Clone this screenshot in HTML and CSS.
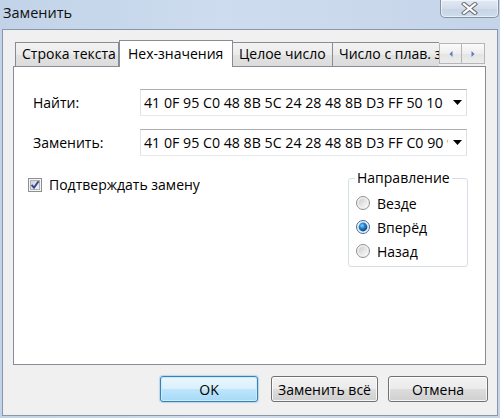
FILE: index.html
```html
<!DOCTYPE html>
<html lang="ru">
<head>
<meta charset="utf-8">
<title>Заменить</title>
<link rel="stylesheet" href="styles.css">
</head>
<body>
<div class="window">
  <header class="titlebar">
    <span class="title">Заменить</span>
    <button class="close" aria-label="Закрыть">
      <svg width="17" height="13" viewBox="0 0 17 13">
        <path d="M3 2 L14 11 M14 2 L3 11" stroke="#6f7277" stroke-width="4.2" stroke-linecap="square" fill="none"/>
        <path d="M3 2 L14 11 M14 2 L3 11" stroke="#ffffff" stroke-width="2.2" stroke-linecap="square" fill="none"/>
      </svg>
    </button>
  </header>
  <main class="client">
    <div class="tabs-row">
      <div class="tabstrip">
        <div class="tab t1">Строка текста</div>
        <div class="tab t2 active">Hex-значения</div>
        <div class="tab t3">Целое число</div>
        <div class="tab t4">Число с плав. запятой</div>
      </div>
      <div class="scroller">
        <span class="sbtn"><svg width="6" height="8" viewBox="0 0 6 8"><path d="M4.5 1 L4.5 7 L1.5 4 Z" fill="#5b7fb8"/></svg></span>
        <span class="sbtn"><svg width="6" height="8" viewBox="0 0 6 8"><path d="M1.5 1 L1.5 7 L4.5 4 Z" fill="#5b7fb8"/></svg></span>
      </div>
    </div>
    <section class="panel">
      <div class="field">
        <label class="flabel">Найти:</label>
        <div class="combo">
          <span class="value">41 0F 95 C0 48 8B 5C 24 28 48 8B D3 FF 50 10</span>
          <span class="arrow"><svg width="9" height="5" viewBox="0 0 9 5"><path d="M0 0 H9 L4.5 5 Z" fill="#000"/></svg></span>
        </div>
      </div>
      <div class="field">
        <label class="flabel">Заменить:</label>
        <div class="combo">
          <span class="value">41 0F 95 C0 48 8B 5C 24 28 48 8B D3 FF C0 90 90</span>
          <span class="arrow"><svg width="9" height="5" viewBox="0 0 9 5"><path d="M0 0 H9 L4.5 5 Z" fill="#000"/></svg></span>
        </div>
      </div>
      <div class="options">
        <label class="check">
          <svg class="box" width="14" height="14" viewBox="0 0 14 14">
            <defs>
              <linearGradient id="cg" x1="0" y1="0" x2="1" y2="1">
                <stop offset="0" stop-color="#cbcfd5"/>
                <stop offset="1" stop-color="#f6f6f6"/>
              </linearGradient>
            </defs>
            <rect x="0.5" y="0.5" width="13" height="13" fill="#f4f4f4" stroke="#8e8f8f"/>
            <rect x="2.5" y="2.5" width="9" height="9" fill="url(#cg)" stroke="#aeb3b9"/>
            <path d="M3.6 6.8 L6 9.6 L10.6 3.2" stroke="#36498c" stroke-width="1.9" fill="none"/>
          </svg>
          <span>Подтверждать замену</span>
        </label>
        <fieldset class="group">
          <legend>Направление</legend>
          <label class="radio">
            <svg width="14" height="14" viewBox="0 0 14 14">
              <defs>
                <linearGradient id="rg" x1="0" y1="0" x2="1" y2="1">
                  <stop offset="0" stop-color="#cdcdcd"/>
                  <stop offset="1" stop-color="#fbfbfb"/>
                </linearGradient>
              </defs>
              <circle cx="7" cy="7" r="6.5" fill="#f2f2f2" stroke="#8e8f8f"/>
              <circle cx="7" cy="7" r="4.6" fill="url(#rg)"/>
            </svg>
            <span>Везде</span>
          </label>
          <label class="radio">
            <svg width="14" height="14" viewBox="0 0 14 14">
              <defs>
                <radialGradient id="sg" cx="0.4" cy="0.35" r="0.7">
                  <stop offset="0" stop-color="#8fd3ff"/>
                  <stop offset="0.45" stop-color="#1d7fcf"/>
                  <stop offset="1" stop-color="#093f7d"/>
                </radialGradient>
              </defs>
              <circle cx="7" cy="7" r="6.5" fill="#f2f2f2" stroke="#3c6e9c"/>
              <circle cx="7" cy="7" r="4.4" fill="url(#sg)"/>
            </svg>
            <span>Вперёд</span>
          </label>
          <label class="radio">
            <svg width="14" height="14" viewBox="0 0 14 14">
              <circle cx="7" cy="7" r="6.5" fill="#f2f2f2" stroke="#8e8f8f"/>
              <circle cx="7" cy="7" r="4.6" fill="url(#rg)"/>
            </svg>
            <span>Назад</span>
          </label>
        </fieldset>
      </div>
    </section>
    <div class="buttons">
      <button class="btn ok">OK</button>
      <button class="btn all">Заменить всё</button>
      <button class="btn cancel">Отмена</button>
    </div>
  </main>
</div>
</body>
</html>
```
FILE: styles.css
```css
* { box-sizing: border-box; }

html, body {
  margin: 0;
  padding: 0;
  width: 500px;
  height: 418px;
  overflow: hidden;
}

body {
  font-family: "Open Sans", "Noto Sans", "DejaVu Sans", sans-serif;
  font-size: 14px;
  color: #000;
}

.window {
  width: 500px;
  height: 418px;
  display: flex;
  flex-direction: column;
  padding: 0 2px 2px 2px;
  background: linear-gradient(90deg, #c2d3e9 0%, #cddcee 45%, #c9d8eb 75%, #c4d4e9 100%);
}

.titlebar {
  height: 29px;
  flex: none;
  display: flex;
  justify-content: space-between;
  align-items: flex-start;
}

.title {
  padding-left: 1px;
  line-height: 26px;
  font-size: 14.5px;
  color: #111;
}

.close {
  width: 59px;
  height: 18px;
  margin-right: -1px;
  padding: 0;
  border: 1px solid #8592a3;
  border-top: none;
  border-radius: 0 0 5px 5px;
  background: linear-gradient(#e2e9f3, #d3deeb 50%, #c7d4e5 51%, #cfdcec);
  box-shadow: inset 0 0 0 1px rgba(255,255,255,0.55);
  display: flex;
  align-items: center;
  justify-content: center;
}

.close svg { display: block; margin-top: -1px; }

.client {
  flex: 1;
  border: 1px solid #8a97a8;
  background: #f0f0f0;
  padding: 10px 11px 0 10px;
  display: flex;
  flex-direction: column;
}

/* Tabs */
.tabs-row {
  height: 26px;
  display: flex;
  align-items: flex-end;
  padding-left: 2px;
  position: relative;
  z-index: 1;
}

.tabstrip {
  width: 424px;
  height: 27px;
  margin-bottom: -1px;
  display: flex;
  align-items: flex-end;
  overflow: hidden;
}

.tab {
  flex: none;
  height: 24px;
  margin-bottom: 1px;
  border: 1px solid #898c95;
  border-bottom: none;
  border-left-width: 0;
  background: linear-gradient(#f3f3f3, #ebebeb 50%, #e2e2e2 51%, #dcdcdc);
  line-height: 22px;
  padding-left: 6px;
  white-space: nowrap;
}

.tab.t1 { width: 104px; border-left-width: 1px; }
.tab.t2 { width: 114px; }
.tab.t3 { width: 100px; }
.tab.t4 { width: 130px; }

.tab.active {
  height: 27px;
  margin-bottom: 0;
  background: #fff;
  border-left-width: 1px;
  padding-top: 2px;
  padding-left: 8px;
}

.tab.t3 { border-left-width: 0; }

.scroller {
  align-self: flex-start;
  margin-top: 3px;
  display: flex;
}

.sbtn {
  width: 23px;
  height: 21px;
  border: 1px solid #b3b6bb;
  background: linear-gradient(#fbfbfb, #eeeeee 50%, #e4e4e4 51%, #ececec);
  display: flex;
  align-items: center;
  justify-content: center;
}

.sbtn + .sbtn { border-left: none; width: 23px; }

/* Panel */
.panel {
  height: 299px;
  flex: none;
  background: #fff;
  border: 1px solid #898c95;
  padding: 22px 18px 0 14px;
  display: flex;
  flex-direction: column;
}

.field {
  display: flex;
  align-items: center;
  height: 27px;
}

.field + .field { margin-top: 13px; }

.flabel {
  width: 112px;
  padding-left: 5px;
  flex: none;
}

.combo {
  flex: 1;
  min-width: 0;
  height: 27px;
  display: flex;
  align-items: center;
  border: 1px solid;
  border-color: #abadb3 #dbdfe6 #e3e9ef #e2e3ea;
  background: #fff;
}

.combo .value {
  flex: 1;
  min-width: 0;
  overflow: hidden;
  white-space: nowrap;
  padding-left: 3px;
  font-size: 14.2px;
}

.combo .arrow {
  flex: none;
  width: 18px;
  display: flex;
  justify-content: center;
}

.options {
  margin-top: 13px;
  display: flex;
  justify-content: space-between;
  align-items: flex-start;
}

.check {
  margin-top: 8px;
  display: flex;
  align-items: center;
  gap: 7px;
  line-height: 16px;
}

.check .box { display: block; flex: none; }

.group {
  width: 120px;
  margin: 0 -1px 0 0;
  padding: 4px 4px 3px 7px;
  border: 1px solid #d5dfe5;
  border-radius: 3px;
}

.group legend {
  padding: 0 2px;
  margin-left: -1px;
  line-height: 18px;
}

.radio {
  display: flex;
  align-items: center;
  gap: 7px;
  height: 24px;
}

.radio svg { display: block; flex: none; }

/* Buttons */
.buttons {
  margin-top: 11px;
  margin-right: -2px;
  display: flex;
  justify-content: flex-end;
}

.btn {
  height: 26px;
  padding: 0;
  font-family: inherit;
  font-size: 14px;
  color: #000;
  border: 1px solid #707070;
  border-radius: 3px;
  background: linear-gradient(#f2f2f2, #ebebeb 50%, #dddddd 51%, #cfcfcf);
  box-shadow: inset 0 0 0 1px rgba(255,255,255,0.8);
}

.btn.ok {
  width: 98px;
  border-color: #3c7fb1;
  background: linear-gradient(#eaf6fd, #d9f0fc 50%, #bee6fd 51%, #a7d9f5);
  box-shadow: inset 0 0 0 1px #c9ecff, 0 0 1px 1px rgba(90,170,230,0.35);
}

.btn.all { width: 107px; margin-left: 13px; }
.btn.cancel { width: 100px; margin-left: 10px; }
```
